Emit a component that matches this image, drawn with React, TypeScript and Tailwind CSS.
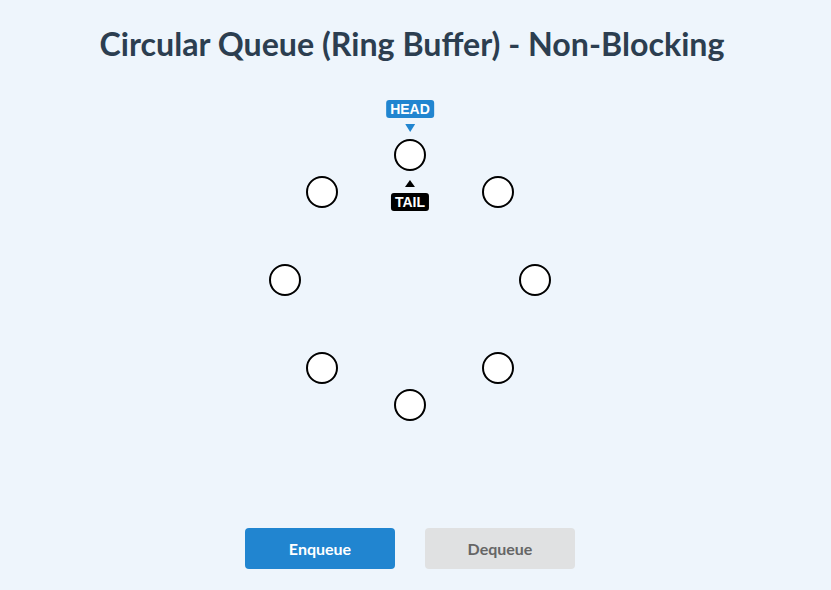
const SLOTS = 8;
const RADIUS = 125;
const NODE = 32;

function Node({ index }: { index: number }) {
  const angle = (index / SLOTS) * Math.PI * 2 - Math.PI / 2;
  const x = 150 + RADIUS * Math.cos(angle);
  const y = 150 + RADIUS * Math.sin(angle);
  return (
    <div
      className="absolute"
      style={{ left: x - NODE / 2, top: y - NODE / 2 }}
    >
      <div className="relative w-[32px] h-[32px] rounded-full border-2 border-black bg-white">
        {index === 0 && (
          <>
            {/* head pointer */}
            <div className="absolute left-1/2 -translate-x-1/2 bottom-[37px] flex flex-col items-center">
              <span className="bg-[#2185d0] text-white text-[14px] font-bold leading-none px-[4px] pt-[2px] pb-[2px] rounded-[3px] font-['Liberation_Sans',Arial,sans-serif]">
                HEAD
              </span>
              <svg width="10" height="8" viewBox="0 0 10 8" className="mt-[6px]">
                <polygon points="0,0 10,0 5,8" fill="#2185d0" />
              </svg>
            </div>
            {/* tail pointer */}
            <div className="absolute left-1/2 -translate-x-1/2 top-[39px] flex flex-col items-center">
              <svg width="10" height="7" viewBox="0 0 10 7">
                <polygon points="5,0 10,7 0,7" fill="#000" />
              </svg>
              <span className="mt-[6px] bg-black text-white text-[14px] font-bold leading-none px-[4px] pt-[2px] pb-[2px] rounded-[3px] font-['Liberation_Sans',Arial,sans-serif]">
                TAIL
              </span>
            </div>
          </>
        )}
      </div>
    </div>
  );
}

export default function App() {
  return (
    <div className="min-h-[590px] w-full bg-[#eef5fc] flex flex-col items-center pr-[11px] font-['Lato',sans-serif]">
      <h1 className="mt-[25px] ml-[4px] text-[32.2px] font-bold leading-[38px] text-[#2c3e50]">
        Circular Queue (Ring Buffer) - Non-Blocking
      </h1>

      <div className="relative mt-[67px] w-[300px] h-[300px]">
        {Array.from({ length: SLOTS }).map((_, i) => (
          <Node key={i} index={i} />
        ))}
      </div>

      <div className="mt-[98px] flex gap-[30px]">
        <button className="w-[150px] h-[41px] rounded-[4px] bg-[#2185d0] text-white text-[16px] font-bold">
          Enqueue
        </button>
        <button className="w-[150px] h-[41px] rounded-[4px] bg-[#e0e1e2] text-[#666] text-[16px] font-bold">
          Dequeue
        </button>
      </div>
    </div>
  );
}
